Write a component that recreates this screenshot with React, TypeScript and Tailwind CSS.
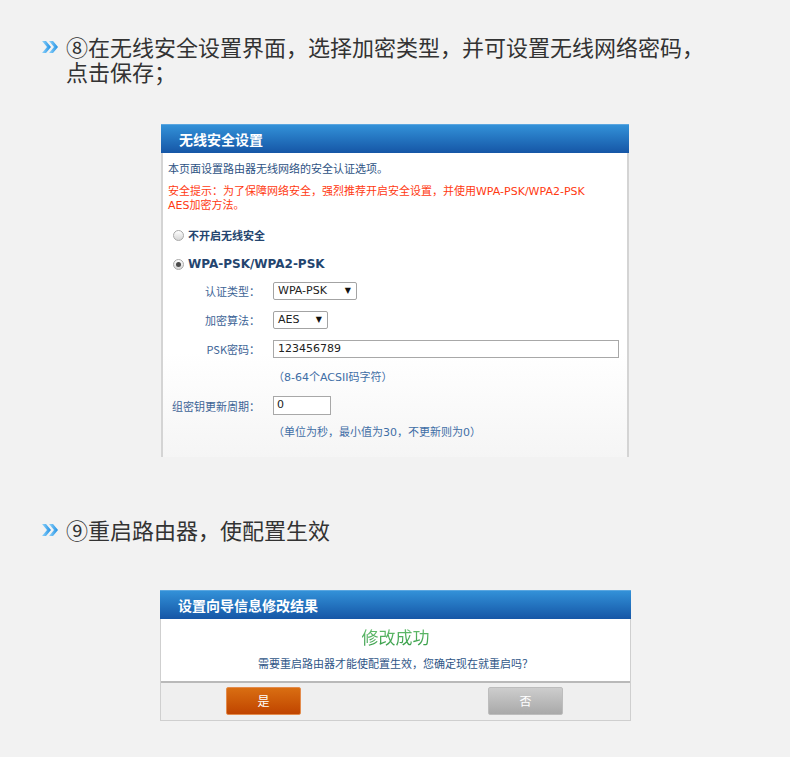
import React from "react";

const cjk = { fontFamily: '"Noto Sans CJK SC", "Noto Sans", sans-serif' };
const ui = { fontFamily: '"DejaVu Sans", "Noto Sans CJK SC", sans-serif' };

function Chevrons() {
  return (
    <svg width="17" height="12" viewBox="0 0 17 12" className="shrink-0">
      <defs>
        <linearGradient id="chev" x1="0" y1="0" x2="1" y2="0">
          <stop offset="0" stopColor="#8fd3fb" />
          <stop offset="1" stopColor="#1f8fe3" />
        </linearGradient>
      </defs>
      <path d="M0 0h4l5 6-5 6H0l5-6z" fill="url(#chev)" />
      <path d="M7 0h4l5 6-5 6H7l5-6z" fill="url(#chev)" />
    </svg>
  );
}

function Step({ lines }: { lines: string[] }) {
  return (
    <div className="flex items-start pl-[42px]">
      <div className="h-[25px] flex items-center">
        <Chevrons />
      </div>
      <div className="ml-[7px] text-[22px] leading-[25px] text-[#333333]" style={cjk}>
        {lines.map((l, i) => (
          <div key={i} className="h-[25px] leading-[25px]">
            {l}
          </div>
        ))}
      </div>
    </div>
  );
}

function PanelHeader({ title }: { title: string }) {
  return (
    <div
      className="h-[29px] flex items-center pl-[18px] text-white text-[14px] font-bold bg-gradient-to-b from-[#3391d8] to-[#1656a6] border-t border-t-[#5aa6e0]"
      style={cjk}
    >
      {title}
    </div>
  );
}

function Radio({ checked }: { checked?: boolean }) {
  return (
    <span className="w-[11px] h-[11px] rounded-full border border-[#a9a9a9] bg-gradient-to-b from-[#ffffff] to-[#d6d6d6] flex items-center justify-center shrink-0">
      {checked && <span className="w-[5px] h-[5px] rounded-full bg-[#4a4a4a]" />}
    </span>
  );
}

function Select({ value, width }: { value: string; width: string }) {
  return (
    <div
      className={`${width} h-[18px] border border-[#a3a3a3] rounded-[2px] bg-white flex items-center justify-between pl-[4px] pr-[5px] text-[11px] text-[#222]`}
      style={ui}
    >
      <span>{value}</span>
      <span className="text-[8px] text-[#111]">▼</span>
    </div>
  );
}

function FormRow({ label, children, className }: { label: string; children: React.ReactNode; className: string }) {
  return (
    <div className={`flex items-center ${className}`}>
      <div className="w-[97px] text-right text-[11px] leading-[16px] text-[#3d6496]" style={cjk}>
        {label}
      </div>
      <div className="ml-[13px]">{children}</div>
    </div>
  );
}

function Hint({ text, className }: { text: string; className: string }) {
  return (
    <div className={`pl-[110px] text-[11px] leading-[16px] text-[#3f6ea6] ${className}`} style={ui}>
      {text}
    </div>
  );
}

function WirelessPanel() {
  return (
    <div className="ml-[161px] w-[468px] h-[333px] overflow-hidden">
      <PanelHeader title="无线安全设置" />
      <div className="h-[400px] border-x-2 border-[#d4d4d4] bg-gradient-to-b from-[#ffffff] via-[#ffffff] to-[#ececec]">
        <div className="pt-[7px] pl-[5px] text-[11px] leading-[16px] text-[#2d5283]" style={cjk}>
          本页面设置路由器无线网络的安全认证选项。
        </div>
        <div className="mt-[9px] pl-[5px] text-[11px] leading-[14px] text-[#ff3a12]" style={ui}>
          安全提示：为了保障网络安全，强烈推荐开启安全设置，并使用WPA-PSK/WPA2-PSK
          <br />
          AES加密方法。
        </div>
        <div className="mt-[14px] pl-[10px] h-[16px] flex items-center gap-[4px]">
          <Radio />
          <span className="text-[11px] font-bold text-[#24456f]" style={cjk}>
            不开启无线安全
          </span>
        </div>
        <div className="mt-[13px] pl-[10px] h-[16px] flex items-center gap-[4px]">
          <Radio checked />
          <span className="text-[12px] font-bold text-[#24456f]" style={ui}>
            WPA-PSK/WPA2-PSK
          </span>
        </div>
        <FormRow label="认证类型：" className="mt-[10px]">
          <Select value="WPA-PSK" width="w-[84px]" />
        </FormRow>
        <FormRow label="加密算法：" className="mt-[11px]">
          <Select value="AES" width="w-[55px]" />
        </FormRow>
        <FormRow label="PSK密码：" className="mt-[11px]">
          <div
            className="w-[346px] h-[18px] border border-[#a8a8a8] bg-white pl-[4px] flex items-center text-[11px] text-[#222]"
            style={ui}
          >
            123456789
          </div>
        </FormRow>
        <Hint text="（8-64个ACSII码字符）" className="mt-[12px]" />
        <FormRow label="组密钥更新周期：" className="mt-[10px]">
          <div
            className="w-[58px] h-[19px] border border-[#a8a8a8] bg-white pl-[3px] flex items-center text-[11px] text-[#222]"
            style={ui}
          >
            0
          </div>
        </FormRow>
        <Hint text="（单位为秒，最小值为30，不更新则为0）" className="mt-[10px]" />
        {/* next option row, only its top edge shows inside the clipped panel */}
        <div className="mt-[13px] pl-[12px] h-[16px] flex items-center">
          <Radio />
        </div>
      </div>
    </div>
  );
}

function ResultPanel() {
  return (
    <div className="ml-[160px] w-[471px]">
      <PanelHeader title="设置向导信息修改结果" />
      <div className="border-x border-b border-[#cfcfcf]">
        <div className="h-[62px] bg-white flex flex-col items-center">
          <div
            className="mt-[7px] text-[17px] leading-[22px] bg-gradient-to-b from-[#6cc274] to-[#2f9a44] bg-clip-text text-transparent"
            style={cjk}
          >
            修改成功
          </div>
          <div className="mt-[7px] text-[11px] leading-[16px] text-[#2f5687]" style={cjk}>
            需要重启路由器才能使配置生效，您确定现在就重启吗？
          </div>
        </div>
        <div className="h-[2px] bg-[#b9b9b9]" />
        <div className="h-[37px] bg-[#efefef] flex items-start pt-[4px]">
          <div
            className="ml-[65px] w-[75px] h-[28px] rounded-[2px] border border-[#e38b4c] bg-gradient-to-b from-[#d96e12] to-[#c04400] text-white text-[12px] flex items-center justify-center"
            style={cjk}
          >
            是
          </div>
          <div
            className="ml-[187px] w-[75px] h-[28px] rounded-[2px] border border-[#bdbdbd] bg-gradient-to-b from-[#cdcdcd] to-[#a9a9a9] text-white text-[12px] flex items-center justify-center"
            style={cjk}
          >
            否
          </div>
        </div>
      </div>
    </div>
  );
}

export default function App() {
  return (
    <div className="w-[790px] h-[757px] overflow-hidden bg-[#f2f2f2]">
      <div className="pt-[34px]">
        <Step lines={["⑧在无线安全设置界面，选择加密类型，并可设置无线网络密码，", "点击保存；"]} />
      </div>
      <div className="mt-[40px]">
        <WirelessPanel />
      </div>
      <div className="mt-[60px]">
        <Step lines={["⑨重启路由器，使配置生效"]} />
      </div>
      <div className="mt-[48px]">
        <ResultPanel />
      </div>
    </div>
  );
}
